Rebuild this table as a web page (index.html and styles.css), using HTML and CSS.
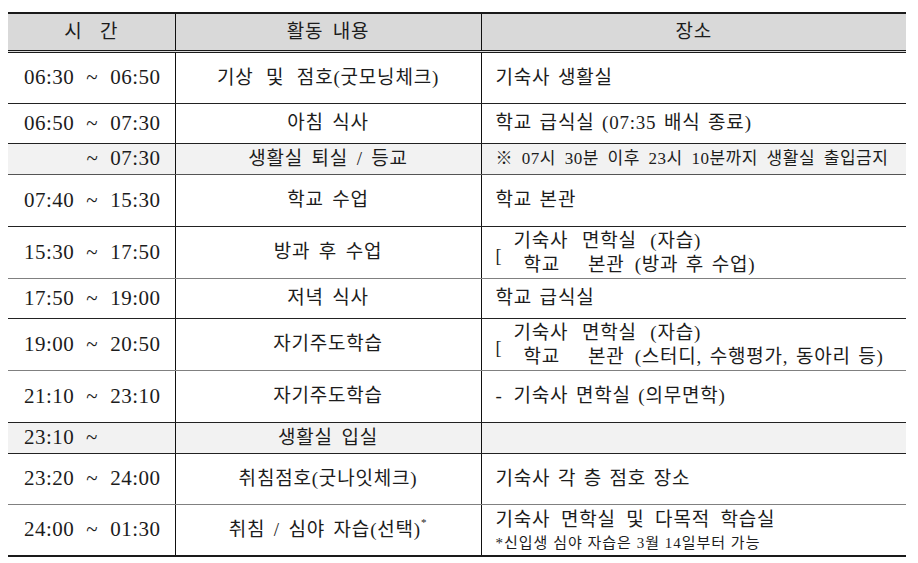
FILE: index.html
```html
<!DOCTYPE html>
<html lang="ko">
<head>
<meta charset="utf-8">
<title>일과표</title>
<link rel="stylesheet" href="styles.css">
</head>
<body>
<table class="sched">
  <colgroup><col class="c1"><col class="c2"><col class="c3"></colgroup>
  <thead>
    <tr class="head">
      <th class="spaced">시 간</th>
      <th>활동 내용</th>
      <th>장소</th>
    </tr>
  </thead>
  <tbody>
    <tr class="h51 dark">
      <td class="time">06:30 ~ 06:50</td>
      <td class="act wide">기상 및 점호(굿모닝체크)</td>
      <td class="place">기숙사 생활실</td>
    </tr>
    <tr class="h40 dark">
      <td class="time">06:50 ~ 07:30</td>
      <td class="act">아침 식사</td>
      <td class="place">학교 급식실 (07:35 배식 종료)</td>
    </tr>
    <tr class="h31 shade mid">
      <td class="time right">~ 07:30</td>
      <td class="act">생활실 퇴실 / 등교</td>
      <td class="place small">※ 07시 30분 이후 23시 10분까지 생활실 출입금지</td>
    </tr>
    <tr class="h52 dark">
      <td class="time">07:40 ~ 15:30</td>
      <td class="act">학교 수업</td>
      <td class="place">학교 본관</td>
    </tr>
    <tr class="h52 light">
      <td class="time">15:30 ~ 17:50</td>
      <td class="act">방과 후 수업</td>
      <td class="place">
        <div class="pair">
          <span class="brk">[</span>
          <div class="lines">
            <div class="l1">기숙사 면학실 (자습)</div>
            <div class="l2"><span class="wa">학교</span><span class="wb">본관</span><span>(방과 후 수업)</span></div>
          </div>
        </div>
      </td>
    </tr>
    <tr class="h40 dark">
      <td class="time">17:50 ~ 19:00</td>
      <td class="act">저녁 식사</td>
      <td class="place">학교 급식실</td>
    </tr>
    <tr class="h52 light">
      <td class="time">19:00 ~ 20:50</td>
      <td class="act">자기주도학습</td>
      <td class="place">
        <div class="pair">
          <span class="brk">[</span>
          <div class="lines">
            <div class="l1">기숙사 면학실 (자습)</div>
            <div class="l2"><span class="wa">학교</span><span class="wb">본관</span><span>(스터디, 수행평가, 동아리 등)</span></div>
          </div>
        </div>
      </td>
    </tr>
    <tr class="h52 dark">
      <td class="time">21:10 ~ 23:10</td>
      <td class="act">자기주도학습</td>
      <td class="place"><span class="dash">-</span>기숙사 면학실 (의무면학)</td>
    </tr>
    <tr class="h31 shade dark">
      <td class="time left">23:10 ~</td>
      <td class="act">생활실 입실</td>
      <td class="place"></td>
    </tr>
    <tr class="h51 light">
      <td class="time">23:20 ~ 24:00</td>
      <td class="act">취침점호(굿나잇체크)</td>
      <td class="place">기숙사 각 층 점호 장소</td>
    </tr>
    <tr class="h51 last">
      <td class="time">24:00 ~ 01:30</td>
      <td class="act">취침 / 심야 자습(선택)<sup class="ast">*</sup></td>
      <td class="place two">
        <div class="big">기숙사 면학실 및 다목적 학습실</div>
        <div class="note">*신입생 심야 자습은 3월 14일부터 가능</div>
      </td>
    </tr>
  </tbody>
</table>
</body>
</html>
```

FILE: styles.css
```css
html, body {
  margin: 0;
  padding: 0;
  background: #ffffff;
}
body {
  font-family: "Liberation Serif", "Noto Sans CJK KR", serif;
  color: #1c1c1c;
  font-size: 19px;
  letter-spacing: 0.8px;
}
.sched {
  margin: 12px 0 0 8px;
  width: 898px;
  border-collapse: collapse;
  table-layout: fixed;
  border-top: 2px solid #1a1a1a;
  border-bottom: 2px solid #1a1a1a;
}
.c1 { width: 167px; }
.c2 { width: 306px; }
.c3 { width: 425px; }

th, td {
  padding: 0;
  vertical-align: middle;
  border-left: 1px solid #111;
  line-height: 1.2;
  white-space: nowrap;
}
th:first-child, td:first-child { border-left: none; }

.head th {
  background: #d9d9d9;
  font-weight: normal;
  height: 36px;
  text-align: center;
  border-bottom: 3px double #1a1a1a;
  word-spacing: 4px;
}
.head th.spaced { word-spacing: 12px; }

tr.dark td { border-bottom: 1px solid #222; }
tr.mid td { border-bottom: 1px solid #555; }
tr.light td { border-bottom: 1px solid #808080; }

.h51 td { height: 50px; }
.h52 td { height: 51px; }
.h40 td { height: 39px; }
.h31 td { height: 30px; }
.shade td { background: #f2f2f2; }

.time {
  font-size: 21px;
  letter-spacing: 0.5px;
  padding: 0 14px 0 16px;
  text-align: justify;
  text-align-last: justify;
}
.time.right { text-align: right; text-align-last: right; word-spacing: 6px; }
.time.left { text-align: left; text-align-last: left; word-spacing: 6px; }

.act {
  text-align: center;
  word-spacing: 3px;
}
.act.wide { word-spacing: 7px; }
.place {
  text-align: left;
  padding-left: 14px;
  word-spacing: 2px;
}
.place.small {
  font-size: 17px;
  letter-spacing: 0.5px;
  word-spacing: 4px;
}
.pair {
  display: flex;
  align-items: center;
}
.brk {
  font-size: 18px;
  width: 18px;
  padding-top: 8px;
  flex: none;
}
.lines {
  display: flex;
  flex-direction: column;
  line-height: 24px;
}
.l1 { word-spacing: 8px; }
.l2 { padding-left: 10px; word-spacing: 2px; }
.wa { margin-right: 28px; }
.wb { margin-right: 10px; }
.dash { display: inline-block; width: 18px; }
.ast { font-size: 11px; vertical-align: top; line-height: 1; position: relative; top: -2px; }

.two { line-height: 1; }
.big { font-size: 19px; line-height: 26px; word-spacing: 5px; }
.note { font-size: 15px; line-height: 20px; letter-spacing: 1px; word-spacing: 0; }
```
